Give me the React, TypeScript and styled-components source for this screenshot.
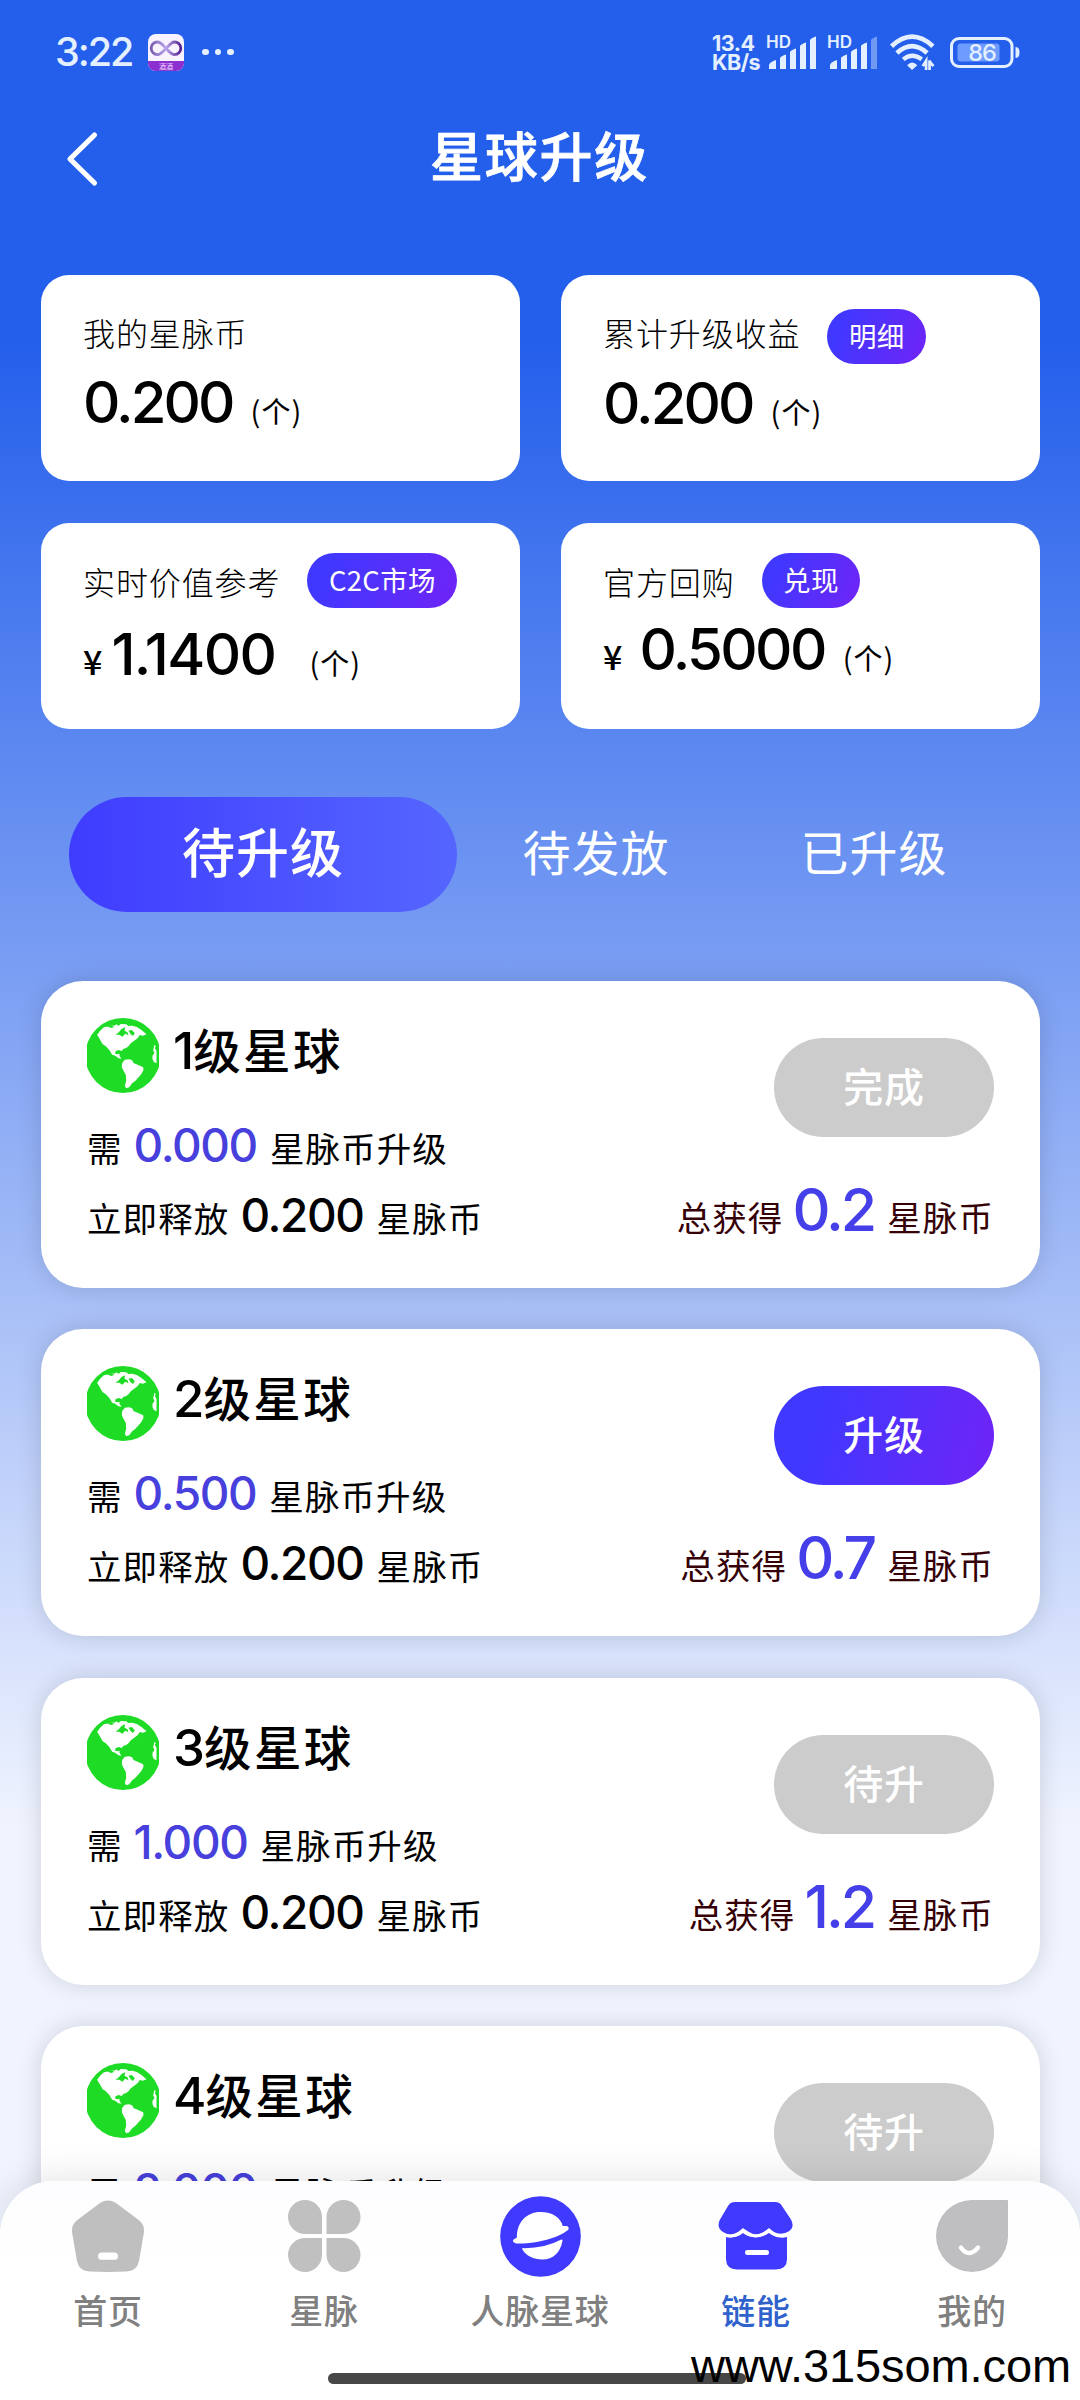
import React from "react";
import styled, { createGlobalStyle } from "styled-components";

const CJK = `"Noto Sans CJK SC", "Noto Sans", sans-serif`;
const LATIN = `Inter, "Noto Sans CJK SC", sans-serif`;

const GlobalStyle = createGlobalStyle`
  * { box-sizing: border-box; }
  body { margin: 0; background: #fff; font-family: ${CJK}; }
  button { font: inherit; border: 0; padding: 0; margin: 0; }
  svg { overflow: visible; }
`;

const Screen = styled.div`
  position: relative;
  width: 1080px;
  height: 2400px;
  overflow: hidden;
  display: flex;
  flex-direction: column;
  color: #000;
  background: linear-gradient(180deg, #245feb 0, #245feb 340px, #f0f4fe 1830px);
`;

/* ---------- status bar ---------- */
const StatusBar = styled.div`
  flex: none;
  height: 104px;
  padding: 0 60px 0 55px;
  display: flex;
  align-items: center;
  color: #e4f0ff;
`;
const Clock = styled.span`
  font: 500 39.5px/50px ${LATIN};
  letter-spacing: -2px;
  width: 93px;
  white-space: nowrap;
`;
const Dots = styled.div`
  display: flex;
  gap: 6px;
  margin-left: 18px;
  i { width: 6.5px; height: 6.5px; border-radius: 50%; background: #e4f0ff; }
`;
const StatusRight = styled.div`
  margin-left: auto;
  display: flex;
  align-items: center;
`;
const Speed = styled.div`
  width: 55px;
  display: flex;
  flex-direction: column;
  font: 700 21.5px/19px ${LATIN};
  letter-spacing: -0.5px;
  white-space: nowrap;
  padding-top: 2px;
`;
const BatterySlot = styled.div`
  margin-left: 14px;
  svg { display: block; }
`;

/* ---------- header ---------- */
const Header = styled.header`
  flex: none;
  height: 171px;
  padding: 0 66px 0 65px;
  display: grid;
  grid-template-columns: 60px 1fr 60px;
  align-items: start;
`;
const BackButton = styled.button`
  background: none;
  height: 110px;
  display: flex;
  align-items: center;
  justify-content: flex-start;
`;
const Title = styled.h1`
  margin: 0;
  font-size: 53px;
  font-weight: 500;
  -webkit-text-stroke: 0.8px #fff;
  letter-spacing: 1.7px;
  line-height: 101px;
  text-align: center;
  color: #fff;
`;

/* ---------- summary ---------- */
const SummaryGrid = styled.section`
  flex: none;
  padding: 0 40px 0 41px;
  display: grid;
  grid-template-columns: 479px 479px;
  grid-template-rows: 206px 206px;
  gap: 42px 41px;
`;
const SummaryCard = styled.article<{ $top: number }>`
  background: #fff;
  border-radius: 28px;
  padding: ${(p) => p.$top}px 20px 0 42px;
`;
const LabelRow = styled.div`
  display: flex;
  align-items: center;
  height: 55px;
  gap: 27px;
`;
const Label = styled.span<{ $shift: number }>`
  font-size: 32px;
  font-weight: 300;
  letter-spacing: 0.9px;
  line-height: 46px;
  white-space: nowrap;
  margin-top: ${(p) => p.$shift}px;
`;
const Pill = styled.button`
  height: 55px;
  padding: 0 21.5px 3px;
  border-radius: 28px;
  background: linear-gradient(115deg, #4038ff 15%, #7024f6 100%);
  color: #fff;
  font-size: 27.5px;
  line-height: 44px;
  letter-spacing: 0.3px;
  white-space: nowrap;
`;
const ValueRow = styled.div<{ $top: number }>`
  display: flex;
  align-items: baseline;
  margin-top: ${(p) => p.$top}px;
  line-height: 1;
  white-space: nowrap;
`;
const Amount = styled.span<{ $tracking: number }>`
  font: 500 58px/1 ${LATIN};
  letter-spacing: ${(p) => p.$tracking}px;
`;
const Unit = styled.span<{ $gap: number }>`
  font-size: 29px;
  font-weight: 400;
  letter-spacing: 1px;
  line-height: 1;
  margin-left: ${(p) => p.$gap}px;
`;
const Yen = styled.span<{ $gap: number }>`
  font-size: 34px;
  font-weight: 500;
  line-height: 1;
  margin-right: ${(p) => p.$gap}px;
`;

/* ---------- tabs ---------- */
const Tabs = styled.nav`
  flex: none;
  display: flex;
  margin: 68px 0 69px 69px;
  height: 115px;
`;
const Tab = styled.button<{ $active?: boolean }>`
  width: ${(p) => (p.$active ? 388 : 278)}px;
  height: 115px;
  padding-bottom: 9px;
  border-radius: 58px;
  background: ${(p) => (p.$active ? "linear-gradient(90deg, #3f3cff, #5566ff)" : "none")};
  color: #fff;
  font-size: ${(p) => (p.$active ? 53 : 48)}px;
  font-weight: ${(p) => (p.$active ? 500 : 400)};
  letter-spacing: 1px;
  line-height: 90px;
`;

/* ---------- level cards ---------- */
const LevelList = styled.section`
  flex: none;
  padding: 0 40px 0 41px;
  display: flex;
  flex-direction: column;
  gap: 41.4px;
`;
const LevelCard = styled.article`
  height: 307px;
  border-radius: 42px;
  background: #fff;
  box-shadow: 0 0 24px rgba(0, 0, 0, 0.14);
  padding: 37px 46px 0 46px;
  display: flex;
  justify-content: space-between;
`;
const LevelInfo = styled.div`
  display: flex;
  flex-direction: column;
`;
const LevelHead = styled.div`
  display: flex;
  align-items: center;
  gap: 14px;
  height: 75px;
  svg { display: block; }
`;
const LevelName = styled.h2`
  margin: 0 0 13px;
  font-size: 47.5px;
  font-weight: 500;
  letter-spacing: 2.4px;
  line-height: 60px;
  white-space: nowrap;
  b { font: 500 51px/1 ${LATIN}; letter-spacing: -1px; }
`;
const InfoLine = styled.p<{ $top: number }>`
  margin: ${(p) => p.$top}px 0 0;
  height: 46px;
  display: flex;
  align-items: baseline;
  font-size: 34.5px;
  letter-spacing: 1.1px;
  line-height: 1;
  white-space: nowrap;
`;
const InfoNumber = styled.span<{ $blue?: boolean }>`
  font: 500 46px/1 ${LATIN};
  letter-spacing: -1.4px;
  margin: 0 13px 0 11px;
  color: ${(p) => (p.$blue ? "#4740dc" : "#000")};
`;
const LevelSide = styled.div`
  padding-top: 20px;
  display: flex;
  flex-direction: column;
  align-items: flex-end;
`;
const ActionButton = styled.button<{ $active?: boolean }>`
  width: 220px;
  height: 99px;
  padding-bottom: 5px;
  border-radius: 50px;
  background: ${(p) => (p.$active ? "linear-gradient(105deg, #4038ff 20%, #7024f6 100%)" : "#ccc")};
  color: #fff;
  font-size: 40px;
  font-weight: 500;
  letter-spacing: 0.8px;
  line-height: 80px;
`;
const Total = styled.p`
  margin: 43px 0 0;
  display: flex;
  align-items: baseline;
  color: #350006;
  font-size: 34.5px;
  letter-spacing: 1.1px;
  line-height: 1;
  white-space: nowrap;
`;
const TotalNumber = styled.span`
  font: 500 59px/1 ${LATIN};
  letter-spacing: -3px;
  margin: 0 13px 0 9px;
  color: #443fe8;
`;

/* ---------- bottom navigation ---------- */
const BottomNav = styled.nav`
  position: absolute;
  left: 0;
  right: 0;
  bottom: 0;
  height: 219px;
  border-radius: 54px 54px 0 0;
  background: linear-gradient(180deg, #fdfdff, #fff 100px);
  box-shadow: 0 0 40px rgba(0, 0, 0, 0.12);
  display: flex;
  flex-direction: column;
  align-items: center;
`;
const NavItems = styled.div`
  width: 100%;
  display: grid;
  grid-template-columns: repeat(5, 1fr);
`;
const NavItem = styled.div<{ $active?: boolean }>`
  display: flex;
  flex-direction: column;
  align-items: center;
  color: ${(p) => (p.$active ? "#2f62cc" : "#808080")};
  font-size: 34px;
  font-weight: 500;
  letter-spacing: 0.8px;
  line-height: 50px;
  white-space: nowrap;
`;
const NavIcon = styled.div`
  height: 104px;
  padding-top: 6px;
  display: flex;
  align-items: center;
  svg { display: block; }
`;
const HomeIndicator = styled.div`
  width: 418px;
  height: 11px;
  margin: auto 7px 16px 0;
  border-radius: 6px;
  background: #474747;
`;
const Watermark = styled.div`
  position: absolute;
  right: 9px;
  bottom: 7px;
  font: 400 47px/54px "Liberation Sans", Arial, sans-serif;
  letter-spacing: -0.1px;
  color: #000;
`;

/* ---------- drawings ---------- */
const AppBadge = () => (
  <svg width="36" height="37" viewBox="0 0 36 37">
    <defs>
      <clipPath id="badge"><rect width="36" height="37" rx="8" /></clipPath>
      <linearGradient id="loop" x1="0" x2="1">
        <stop offset="0" stopColor="#7a5bb0" />
        <stop offset=".5" stopColor="#b9a5ea" />
        <stop offset="1" stopColor="#55208f" />
      </linearGradient>
    </defs>
    <g clipPath="url(#badge)">
      <rect width="36" height="37" fill="#f8f3ff" />
      <rect y="27" width="36" height="10" fill="#8b2fd0" />
      <path d="M18 14.5C14 9.500 11.500 8 9.500 8a6.300 6.300 0 0 0 0 12.600c3 0 5.500-3 8.500-6.100s5.500-6.500 8.500-6.500a6.300 6.300 0 0 1 0 12.600c-3 0-5.500-3-8.500-6.100z" fill="none" stroke="url(#loop)" strokeWidth="2.800" />
      <text x="18" y="34.500" textAnchor="middle" fontSize="7" fill="#f3dcff" fontFamily={`"Noto Sans CJK SC", sans-serif`}>酒酒</text>
    </g>
  </svg>
);

const Signal = ({ weak }: { weak?: boolean }) => (
  <svg width="61" height="37" viewBox="0 0 61 37">
    <text x="-1" y="14" fontFamily="Inter, sans-serif" fontWeight="600" fontSize="17" fill="#e4f0ff">HD</text>
    <g fill="#e4f0ff">
      <path d="M2 35v-4q1-3 7-5v9z" />
      <path d="M13 35V24q1-2 6-3.500V35z" />
      <path d="M23 35V18q1-2 6-3.500V35z" />
      <path d="M33 35V12q1-2 6-3.500V35z" />
      <path d="M43 35V6q1-2 6-3.500V35z" opacity={weak ? 0.4 : 1} />
    </g>
  </svg>
);

const Wifi = () => (
  <svg width="47" height="37" viewBox="0 0 47 38">
    <g fill="none" stroke="#e4f0ff" strokeWidth="4.800">
      <path d="M2 12.500Q23 -7 44.500 12.500" />
      <path d="M7.500 19.500Q23 5.500 38.500 19.500" />
      <path d="M14 26Q23 18.500 33 26" strokeWidth="4.500" />
    </g>
    <path d="M18 32q5-5.500 10.500 0L23 37z" fill="#e4f0ff" />
    <path d="M37.500 37V27.500L34 33M41 27v10M41 28l4 5" fill="none" stroke="#e4f0ff" strokeWidth="2.800" />
  </svg>
);

const Battery = () => (
  <svg width="70" height="31" viewBox="0 0 70 31">
    <rect x="1.500" y="1.500" width="60.500" height="28" rx="7.500" fill="none" stroke="#e4f0ff" strokeWidth="3" />
    <rect x="7.500" y="6.500" width="42" height="18" rx="3" fill="#6d9bff" />
    <path d="M65.500 10q4 0 4 5.500t-4 5.500z" fill="#e4f0ff" />
    <text x="32" y="24" textAnchor="middle" fontFamily="Inter, sans-serif" fontWeight="500" fontSize="23.500" letterSpacing="-1" fill="#e4f0ff">86</text>
  </svg>
);

const Globe = () => (
  <svg width="72" height="75" viewBox="23 23 215 225" style={{ overflow: "hidden" }}>
    <ellipse cx="130.500" cy="135.500" rx="113" ry="112.500" fill="#1edb26" />
    <path fill="#fff" d="M53 73L62 61L73 51L88 48L94 44L104 46L112 42L116 47L124 41L140 42L147 47L158 46L172 50L186 59L201 72L190 76L181 74L174 84L164 91L154 99L147 108L140 113L131 116L127 122L117 119L108 123L107 130L114 132L120 130L120 137L126 145L117 144L107 136L98 133L90 120L79 108L69 101L61 87z" />
    <path fill="#1edb26" d="M108 73L118 66L126 56L137 51L135 61L144 66L147 75L137 70L129 79L119 73zM147 61L157 59L166 69L160 77L153 71zM82 47L94 53L104 50L97 44z" />
    <path fill="#fff" d="M128 158L136 148L149 147L158 150L162 158L176 164L191 171L192 179L185 192L176 202L167 212L158 219L149 231L140 234L136 226L140 211L139 194L132 181L127 171z" />
    <path fill="#fff" d="M225 103l4 5-3 5 5 8v38l-8-4q-6-9-4-19l6-8-4-8z" />
  </svg>
);

const HomeIcon = () => (
  <svg width="72" height="72" viewBox="0 0 72 74" preserveAspectRatio="none">
    <path fill="#bfbfbf" d="M28 3q8-5 16 0l22 17q7 5 6 13l-5 30q-2 10-13 10.500-18 1-36 0Q7 73 5 63L0 33q-1-8 6-13z" />
    <rect x="26" y="54" width="20" height="7.500" rx="3.700" fill="#fff" />
  </svg>
);
const CloverIcon = () => (
  <svg width="72" height="72" viewBox="0 0 72 74" preserveAspectRatio="none" fill="#c0c0c0">
    <path d="M34 35H17A17 17.500 0 1 1 34 17.500z" />
    <path d="M38.500 35h17A17 17.500 0 1 0 38.500 17.500z" />
    <path d="M34 39H17A17 17.500 0 1 0 34 56.500z" />
    <path d="M38.500 39h17A17 17.500 0 1 1 38.500 56.500z" />
  </svg>
);
const PlanetIcon = () => (
  <svg width="81" height="81" viewBox="29 32 244 244">
    <circle cx="151" cy="154" r="121.500" fill="#403aff" />
    <path fill="#fff" d="M80 157C79 112 108 80 151 80c37 0 61 18 67 42l13 0q9 6 2 13c-30 24-102 43-155 40q-13-3-9-11z" />
    <path fill="#fff" d="M99 189q65 1 113-25 7-3 5 4c-6 34-28 55-60 55-28 0-49-11-60-29-2-3-1-5 2-5z" />
  </svg>
);
const ShopIcon = () => (
  <svg width="73" height="68" viewBox="0 0 73 70" preserveAspectRatio="none">
    <path fill="#403aff" d="M17 0h38q5 0 7 4l9 14q4 8-2 12-8 5-15 1l-5-4-5 4q-8 5-15 0l-6-4-5 4q-8 5-15 0-7-5-3-13l8-14q2-4 7-4z" />
    <path fill="#403aff" d="M6 36q10 2 17-4 12 9 26 0 8 6 18 4v23q0 10-11 10.500H17Q6 69 6 59z" />
    <path fill="none" stroke="#fff" strokeWidth="2.800" strokeLinecap="round" d="M4 34q11 4 19-5 4 4 7 5 7 2 13-1l6-4q7 9 20 5" />
    <rect x="25" y="49.500" width="24" height="5" rx="2.300" fill="#fff" />
  </svg>
);
const FaceIcon = () => (
  <svg width="72" height="72" viewBox="0 0 72 74" preserveAspectRatio="none">
    <path fill="#bfbfc1" d="M36 0h35q1 0 1 1v36A36 37 0 1 1 36 0z" />
    <path d="M25 49q8 11 17 0" fill="none" stroke="#fff" strokeWidth="4.500" strokeLinecap="round" />
  </svg>
);

/* ---------- data ---------- */
const summary = [
  { label: "我的星脉币", value: "0.200", tracking: -2.9, top: 34, shift: -9, rowTop: 9, unitGap: 18 },
  { label: "累计升级收益", pill: "明细", value: "0.200", tracking: -2.9, top: 34, shift: -9, rowTop: 10, unitGap: 18 },
  { label: "实时价值参考", pill: "C2C市场", value: "1.1400", tracking: -1.6, top: 30, shift: 0, rowTop: 17, yenGap: 9, unitGap: 34 },
  { label: "官方回购", pill: "兑现", value: "0.5000", tracking: -2.6, top: 30, shift: 0, rowTop: 12, yenGap: 17, unitGap: 18 },
];
const levels = [
  { level: 1, need: "0.000", release: "0.200", total: "0.2", action: "完成" },
  { level: 2, need: "0.500", release: "0.200", total: "0.7", action: "升级", active: true },
  { level: 3, need: "1.000", release: "0.200", total: "1.2", action: "待升" },
  { level: 4, need: "2.000", release: "0.200", total: "2.2", action: "待升" },
];
const navItems = [
  { name: "首页", icon: <HomeIcon /> },
  { name: "星脉", icon: <CloverIcon /> },
  { name: "人脉星球", icon: <PlanetIcon /> },
  { name: "链能", icon: <ShopIcon />, active: true },
  { name: "我的", icon: <FaceIcon /> },
];

export default function App() {
  return (
    <Screen>
      <GlobalStyle />
      <StatusBar>
        <Clock>3:22</Clock>
        <AppBadge />
        <Dots><i /><i /><i /></Dots>
        <StatusRight>
          <Speed><span>13.4</span><span>KB/s</span></Speed>
          <Signal />
          <Signal weak />
          <Wifi />
          <BatterySlot><Battery /></BatterySlot>
        </StatusRight>
      </StatusBar>
      <Header>
        <BackButton aria-label="back">
          <svg width="34" height="54" viewBox="0 0 34 55" preserveAspectRatio="none">
            <path d="M29.500 3L5 27.500 29.500 52" fill="none" stroke="#fff" strokeWidth="5.200" strokeLinecap="round" strokeLinejoin="round" />
          </svg>
        </BackButton>
        <Title>星球升级</Title>
      </Header>
      <SummaryGrid>
        {summary.map((s) => (
          <SummaryCard key={s.label} $top={s.top}>
            <LabelRow>
              <Label $shift={s.shift}>{s.label}</Label>
              {s.pill && <Pill>{s.pill}</Pill>}
            </LabelRow>
            <ValueRow $top={s.rowTop}>
              {s.yenGap !== undefined && <Yen $gap={s.yenGap}>¥</Yen>}
              <Amount $tracking={s.tracking}>{s.value}</Amount>
              <Unit $gap={s.unitGap}>(个)</Unit>
            </ValueRow>
          </SummaryCard>
        ))}
      </SummaryGrid>
      <Tabs>
        <Tab $active>待升级</Tab>
        <Tab>待发放</Tab>
        <Tab>已升级</Tab>
      </Tabs>
      <LevelList>
        {levels.map((l) => (
          <LevelCard key={l.level}>
            <LevelInfo>
              <LevelHead>
                <Globe />
                <LevelName><b>{l.level}</b>级星球</LevelName>
              </LevelHead>
              <InfoLine $top={29}>
                需<InfoNumber $blue>{l.need}</InfoNumber>星脉币升级
              </InfoLine>
              <InfoLine $top={24}>
                立即释放<InfoNumber>{l.release}</InfoNumber>星脉币
              </InfoLine>
            </LevelInfo>
            <LevelSide>
              <ActionButton $active={l.active}>{l.action}</ActionButton>
              <Total>
                总获得<TotalNumber>{l.total}</TotalNumber>星脉币
              </Total>
            </LevelSide>
          </LevelCard>
        ))}
      </LevelList>
      <BottomNav>
        <NavItems>
          {navItems.map((n) => (
            <NavItem key={n.name} $active={n.active}>
              <NavIcon>{n.icon}</NavIcon>
              {n.name}
            </NavItem>
          ))}
        </NavItems>
        <HomeIndicator />
      </BottomNav>
      <Watermark>www.315som.com</Watermark>
    </Screen>
  );
}
